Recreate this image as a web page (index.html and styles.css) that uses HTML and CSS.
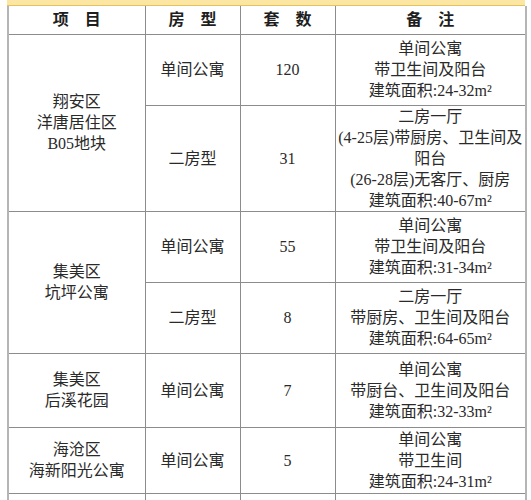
FILE: index.html
```html
<!DOCTYPE html>
<html lang="zh-CN">
<head>
<meta charset="utf-8">
<link rel="stylesheet" href="styles.css">
</head>
<body>
<div class="band"></div>
<table class="grid">
  <colgroup>
    <col class="c1"><col class="c2"><col class="c3"><col class="c4">
  </colgroup>
  <thead>
    <tr class="head">
      <th>项　目</th><th>房　型</th><th>套　数</th><th>备　注</th>
    </tr>
  </thead>
  <tbody>
    <tr class="r71">
      <td rowspan="2">翔安区<br>洋唐居住区<br>B05地块</td>
      <td>单间公寓</td><td>120</td>
      <td>单间公寓<br>带卫生间及阳台<br>建筑面积:24-32m²</td>
    </tr>
    <tr class="r106">
      <td>二房型</td><td>31</td>
      <td>二房一厅<br>(4-25层)带厨房、卫生间及<br>阳台<br>(26-28层)无客厅、厨房<br>建筑面积:40-67m²</td>
    </tr>
    <tr class="r71">
      <td rowspan="2">集美区<br>坑坪公寓</td>
      <td>单间公寓</td><td>55</td>
      <td>单间公寓<br>带卫生间及阳台<br>建筑面积:31-34m²</td>
    </tr>
    <tr class="r71">
      <td>二房型</td><td>8</td>
      <td>二房一厅<br>带厨房、卫生间及阳台<br>建筑面积:64-65m²</td>
    </tr>
    <tr class="r74">
      <td>集美区<br>后溪花园</td>
      <td>单间公寓</td><td>7</td>
      <td>单间公寓<br>带厨台、卫生间及阳台<br>建筑面积:32-33m²</td>
    </tr>
    <tr class="r66">
      <td>海沧区<br>海新阳光公寓</td>
      <td>单间公寓</td><td>5</td>
      <td>单间公寓<br>带卫生间<br>建筑面积:24-31m²</td>
    </tr>
    <tr class="r30">
      <td></td><td></td><td></td><td></td>
    </tr>
  </tbody>
</table>
</body>
</html>
```

FILE: styles.css
```css
html, body {
  margin: 0;
  padding: 0;
  background: #ffffff;
}
body {
  font-family: "Liberation Serif", "Noto Sans CJK SC", serif;
  color: #2a2a2a;
  overflow: hidden;
  height: 500px;
}
.band {
  height: 5px;
  background: #fbe6a4;
  border-bottom: 1px solid #e6c25c;
  margin-left: 7px;
  margin-right: 6px;
}
.grid {
  margin-left: 7px;
  width: 518px;
  table-layout: fixed;
  border-collapse: collapse;
  border-left: 2px solid #b5b5b5;
  border-right: 2px solid #b5b5b5;
}
.c1 { width: 137px; }
.c2 { width: 95px; }
.c3 { width: 95px; }
.c4 { width: 191px; }
.grid th, .grid td {
  border: 1px solid #8c8c8c;
  text-align: center;
  vertical-align: middle;
  padding: 0;
  font-size: 16px;
  line-height: 21px;
}
.grid thead th {
  border-top: none;
  font-weight: bold;
  color: #1e1e1e;
}
.head { height: 28px; }
.r71 { height: 71px; }
.r106 { height: 106px; }
.r74 { height: 74px; }
.r66 { height: 66px; }
.r30 { height: 30px; }
```
